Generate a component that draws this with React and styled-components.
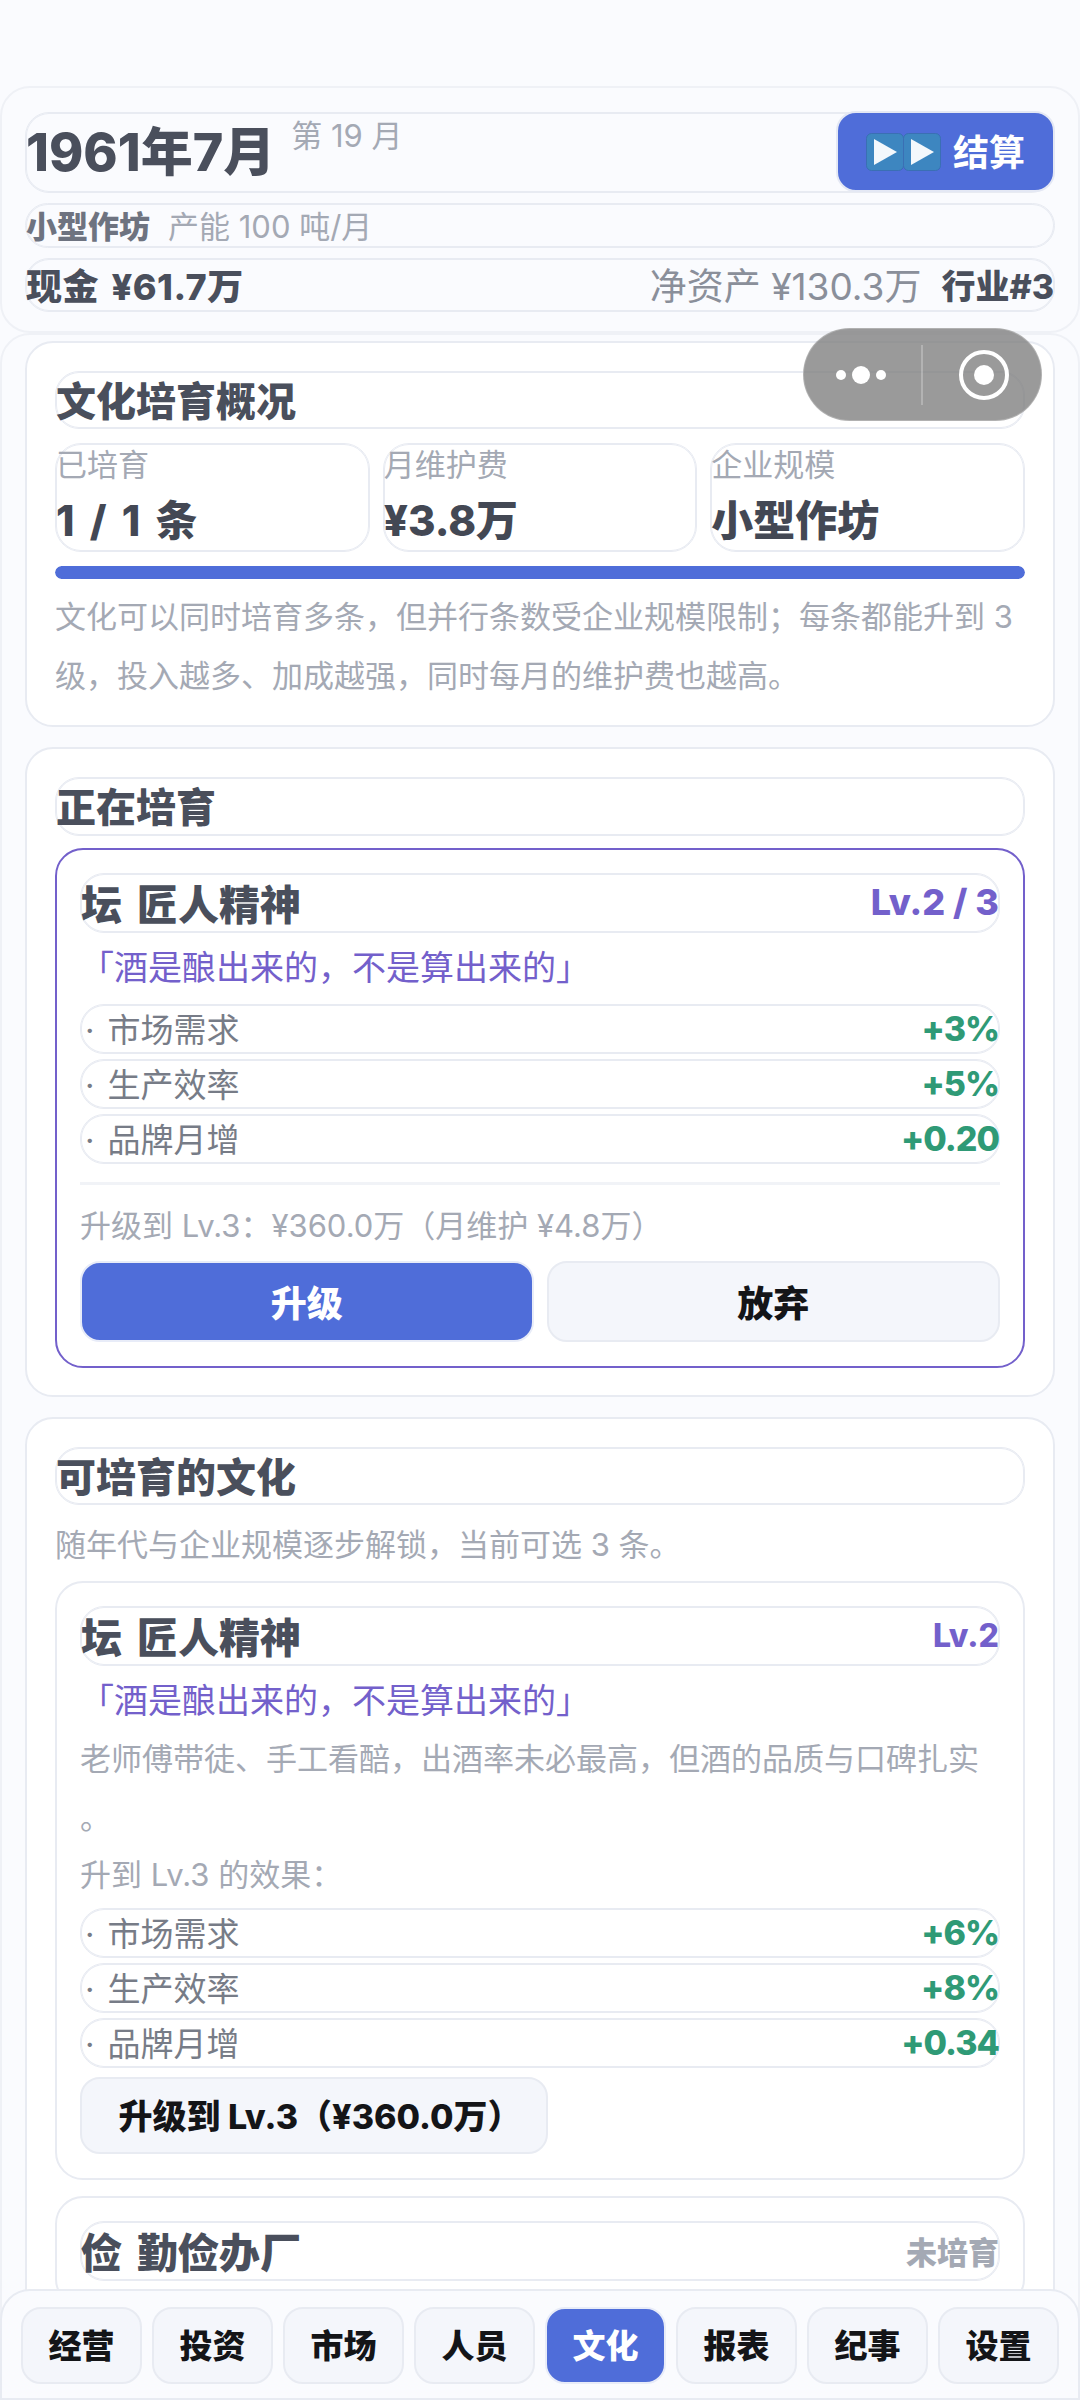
import React from "react";
import styled, { createGlobalStyle } from "styled-components";

const GlobalStyle = createGlobalStyle`
  html, body {
    margin: 0;
    padding: 0;
    height: 100%;
    overflow: hidden;
    background: #fafbfe;
  }
  * {
    box-sizing: border-box;
  }
  body {
    font-family: Inter, "Noto Sans CJK SC", sans-serif;
    color: #4a4f5c;
  }
`;

const line = "#e8ebf2";
const blue = "#4f6dd9";
const purple = "#7360cb";
const muted = "#a4a9b4";
const stack = `Inter, "Noto Sans CJK SC", sans-serif`;

const Page = styled.div`
  height: 2400px;
  padding-top: 86px;
  display: flex;
  flex-direction: column;
  overflow: hidden;
`;

const Header = styled.header`
  border: 2px solid #eff1f6;
  border-radius: 30px;
  padding: 24px 23px 18px;
  display: flex;
  flex-direction: column;
  gap: 10px;
  height: 247px;
  flex: none;
`;

// every text row in this app has a thin rounded outline and no padding,
// the text sits almost on the outline
const Row = styled.div`
  display: flex;
  align-items: center;
  justify-content: ${(p) => p.$justify || "space-between"};
  border: 1px solid ${line};
  box-shadow: inset 0 0 0 1px ${line};
  border-radius: 24px;
  height: ${(p) => p.$h}px;
  padding-bottom: 2px;
  flex: none;
`;

const DateText = styled.div`
  font-size: 52px;
  font-weight: 800;
  line-height: 1;
  margin-top: -4px;
`;

const Month = styled.span`
  font-size: 31px;
  font-weight: 400;
  color: ${muted};
  margin-left: 16px;
  vertical-align: 24px;
`;

const SettleButton = styled.button`
  width: 219px;
  height: 81px;
  margin: 0 -1px 0 0;
  border: 2px solid #e4e8f4;
  border-radius: 20px;
  background: ${blue};
  color: #fff;
  font: 700 36px ${stack};
  display: flex;
  align-items: center;
  justify-content: center;
  gap: 12px;
  padding: 0;
`;

const SettleLabel = styled.span`
  margin-top: -4px;
`;

const Scale = styled.span`
  font-size: 31px;
  font-weight: 800;
  color: #6e7380;
  margin-right: 18px;
`;

const Capacity = styled.span`
  font-size: 31px;
  color: ${muted};
`;

const Cash = styled.span`
  font-size: 36px;
  font-weight: 800;
  word-spacing: 4px;
  letter-spacing: 0.5px;
`;

const RightGroup = styled.div`
  display: flex;
  align-items: center;
  gap: 20px;
`;

const NetWorth = styled.span`
  font-size: 37px;
  color: #8a8f9a;
`;

const Rank = styled.span`
  font-size: 34px;
  font-weight: 800;
`;

const Content = styled.main`
  flex: 1;
  min-height: 0;
  overflow: hidden;
  border: 2px solid #eff1f6;
  border-radius: 30px 30px 0 0;
  padding: 6px 23px 0;
  display: flex;
  flex-direction: column;
  gap: 20px;
`;

const Card = styled.section`
  background: #fff;
  border: 2px solid ${line};
  border-radius: 28px;
  padding: 28px 28px 27px;
  flex: none;
`;

const SectionTitle = styled(Row)`
  font-size: 40px;
  font-weight: 800;
  padding-bottom: 3px;
`;

const Stats = styled.div`
  display: grid;
  grid-template-columns: repeat(3, 1fr);
  gap: 13px;
  margin-top: 14px;
`;

const Stat = styled.div`
  height: 109px;
  border: 1px solid ${line};
  box-shadow: inset 0 0 0 1px ${line};
  border-radius: 26px;
`;

const StatLabel = styled.div`
  font-size: 31px;
  line-height: 42px;
  color: ${muted};
`;

const StatValue = styled.div`
  font-size: 42px;
  font-weight: 800;
  line-height: 56px;
  margin-top: 7px;
  word-spacing: 6px;
  color: #434854;
`;

const Track = styled.div`
  height: 13px;
  margin-top: 14px;
  border-radius: 7px;
  background: ${line};
  overflow: hidden;
`;

const Fill = styled.div`
  height: 100%;
  background: ${blue};
  border-radius: 7px;
`;

const Desc = styled.p`
  margin: ${(p) => p.$m || "0"};
  font-size: 31px;
  line-height: 59px;
  color: ${muted};
`;

const CultureCard = styled.div`
  border: 2px solid ${(p) => (p.$active ? purple : line)};
  border-radius: 28px;
  padding: 23px 23px 24px;
  margin-top: ${(p) => p.$mt || 0}px;
  background: #fff;
`;

const CultureName = styled(Row)`
  font-size: 41px;
  font-weight: 800;
  height: 60px;
  word-spacing: 6px;
`;

const Level = styled.span`
  font-size: ${(p) => (p.$small ? 32 : 36)}px;
  font-weight: 800;
  color: ${purple};
  word-spacing: 0;
`;

const Status = styled.span`
  font-size: 31px;
  font-weight: 800;
  color: ${muted};
`;

const Quote = styled.div`
  font-size: 34px;
  line-height: 59px;
  margin-top: 5px;
  margin-bottom: -1px;
  color: ${purple};
`;

const Effects = styled.div`
  display: flex;
  flex-direction: column;
  gap: 5px;
  margin-top: ${(p) => p.$mt || 0}px;
`;

const Effect = styled(Row)`
  height: 50px;
  font-size: 33px;
  color: #777c87;
`;

const EffectDot = styled.span`
  margin: 0 13px 0 4px;
`;

const EffectValue = styled.span`
  font-size: 34px;
  font-weight: 800;
  letter-spacing: -1px;
  color: #2f9a76;
`;

const Divider = styled.div`
  height: 3px;
  margin-top: 18px;
  background: #f1f3f7;
`;

const UpgradeNote = styled.div`
  font-size: 31px;
  line-height: 60px;
  margin-top: 11px;
  color: ${muted};
`;

const EffectsLabel = styled.div`
  font-size: 31px;
  line-height: 56px;
  color: ${muted};
`;

const Actions = styled.div`
  display: grid;
  grid-template-columns: 1fr 1fr;
  gap: 13px;
  margin-top: 5px;
`;

const ActionButton = styled.button`
  height: 81px;
  border: 2px solid ${(p) => (p.$primary ? "#e8ecf8" : line)};
  border-radius: 20px;
  background: ${(p) => (p.$primary ? blue : "#f4f6fb")};
  color: ${(p) => (p.$primary ? "#fff" : "#141518")};
  font: 800 36px ${stack};
  padding: 0 0 2px;
`;

const UpgradeButton = styled.button`
  display: block;
  width: 468px;
  height: 77px;
  margin-top: 9px;
  border: 2px solid ${line};
  border-radius: 20px;
  background: #f4f6fb;
  color: #141518;
  font: 800 34px ${stack};
  padding: 0 0 2px 12px;
`;

const Capsule = styled.div`
  position: fixed;
  top: 328px;
  left: 803px;
  width: 239px;
  height: 93px;
  border-radius: 47px;
  background: rgba(125, 125, 125, 0.78);
  border: 1px solid rgba(200, 200, 200, 0.5);
  display: flex;
  align-items: center;
`;

const CapsulePart = styled.div`
  flex: 1;
  height: 100%;
  display: flex;
  align-items: center;
  justify-content: center;
  padding: ${(p) => p.$pad};
`;

const CapsuleDivider = styled.div`
  width: 2px;
  height: 60px;
  flex: none;
  background: rgba(255, 255, 255, 0.25);
`;

const Nav = styled.nav`
  position: fixed;
  left: 0;
  right: 0;
  top: 2289px;
  height: 111px;
  background: #fafbfe;
  border: 2px solid ${line};
  border-radius: 30px 30px 0 0;
  padding: 16px 19px 0;
  display: grid;
  grid-template-columns: repeat(8, 1fr);
  gap: 10px;
`;

const NavButton = styled.button`
  height: 77px;
  border: 2px solid ${(p) => (p.$active ? "#e8ecf8" : line)};
  border-radius: 20px;
  background: ${(p) => (p.$active ? blue : "#f4f6fb")};
  color: ${(p) => (p.$active ? "#fff" : "#141518")};
  font: 800 33px ${stack};
  padding: 0 0 3px;
`;

const FastForward = () => (
  <svg width="75" height="38" viewBox="0 0 75 38">
    <rect x="0.5" y="0.5" width="37" height="37" rx="5" fill="#3d86c0" stroke="#3a6fb4" />
    <rect x="37.5" y="0.5" width="37" height="37" rx="5" fill="#3d86c0" stroke="#3a6fb4" />
    <path d="M8 6 L31 19 L8 32 Z" fill="#f4f8fc" />
    <path d="M45 6 L68 19 L45 32 Z" fill="#f4f8fc" />
  </svg>
);

const effectsNow = [
  ["市场需求", "+3%"],
  ["生产效率", "+5%"],
  ["品牌月增", "+0.20"],
];

const effectsNext = [
  ["市场需求", "+6%"],
  ["生产效率", "+8%"],
  ["品牌月增", "+0.34"],
];

const stats = [
  ["已培育", "1 / 1 条"],
  ["月维护费", "¥3.8万"],
  ["企业规模", "小型作坊"],
];

const tabs = ["经营", "投资", "市场", "人员", "文化", "报表", "纪事", "设置"];

const EffectList = ({ items, mt }) => (
  <Effects $mt={mt}>
    {items.map(([name, value]) => (
      <Effect key={name}>
        <span>
          <EffectDot>·</EffectDot>
          {name}
        </span>
        <EffectValue>{value}</EffectValue>
      </Effect>
    ))}
  </Effects>
);

export default function App() {
  return (
    <Page>
      <GlobalStyle />
      <Header>
        <Row $h={81}>
          <DateText>
            1961年7月<Month>第 19 月</Month>
          </DateText>
          <SettleButton>
            <FastForward />
            <SettleLabel>结算</SettleLabel>
          </SettleButton>
        </Row>
        <Row $h={45} $justify="flex-start">
          <Scale>小型作坊</Scale>
          <Capacity>产能 100 吨/月</Capacity>
        </Row>
        <Row $h={54}>
          <Cash>现金 ¥61.7万</Cash>
          <RightGroup>
            <NetWorth>净资产 ¥130.3万</NetWorth>
            <Rank>行业#3</Rank>
          </RightGroup>
        </Row>
      </Header>

      <Content>
        <Card>
          <SectionTitle $h={58}>文化培育概况</SectionTitle>
          <Stats>
            {stats.map(([label, value]) => (
              <Stat key={label}>
                <StatLabel>{label}</StatLabel>
                <StatValue>{value}</StatValue>
              </Stat>
            ))}
          </Stats>
          <Track>
            <Fill style={{ width: `${(1 / 1) * 100}%` }} />
          </Track>
          <Desc $m="8px 0 -7px">
            文化可以同时培育多条，但并行条数受企业规模限制；每条都能升到 3
            级，投入越多、加成越强，同时每月的维护费也越高。
          </Desc>
        </Card>

        <Card>
          <SectionTitle $h={59}>正在培育</SectionTitle>
          <CultureCard $active $mt={12}>
            <CultureName>
              <span>坛 匠人精神</span>
              <Level>Lv.2 / 3</Level>
            </CultureName>
            <Quote>「酒是酿出来的，不是算出来的」</Quote>
            <EffectList items={effectsNow} mt={8} />
            <Divider />
            <UpgradeNote>升级到 Lv.3：¥360.0万（月维护 ¥4.8万）</UpgradeNote>
            <Actions>
              <ActionButton $primary>升级</ActionButton>
              <ActionButton>放弃</ActionButton>
            </Actions>
          </CultureCard>
        </Card>

        <Card>
          <SectionTitle $h={58}>可培育的文化</SectionTitle>
          <Desc $m="10px 0 7px">随年代与企业规模逐步解锁，当前可选 3 条。</Desc>
          <CultureCard>
            <CultureName>
              <span>坛 匠人精神</span>
              <Level $small>Lv.2</Level>
            </CultureName>
            <Quote>「酒是酿出来的，不是算出来的」</Quote>
            <Desc>
              老师傅带徒、手工看醅，出酒率未必最高，但酒的品质与口碑扎实
              <br />。
            </Desc>
            <EffectsLabel>升到 Lv.3 的效果：</EffectsLabel>
            <EffectList items={effectsNext} mt={5} />
            <UpgradeButton>升级到 Lv.3（¥360.0万）</UpgradeButton>
          </CultureCard>
          <CultureCard $mt={16}>
            <CultureName>
              <span>俭 勤俭办厂</span>
              <Status>未培育</Status>
            </CultureName>
          </CultureCard>
        </Card>
      </Content>

      <Capsule>
        <CapsulePart $pad="0 3px 0 0">
          <svg width="60" height="20" viewBox="0 0 60 20">
            <circle cx="10" cy="10" r="5" fill="#fff" />
            <circle cx="30" cy="10" r="9" fill="#fff" />
            <circle cx="50" cy="10" r="5" fill="#fff" />
          </svg>
        </CapsulePart>
        <CapsuleDivider />
        <CapsulePart $pad="0 0 0 4px">
          <svg width="52" height="52" viewBox="0 0 52 52">
            <circle cx="26" cy="26" r="23" fill="none" stroke="#fff" strokeWidth="4" />
            <circle cx="26" cy="26" r="10" fill="#fff" />
          </svg>
        </CapsulePart>
      </Capsule>

      <Nav>
        {tabs.map((tab) => (
          <NavButton key={tab} $active={tab === "文化"}>
            {tab}
          </NavButton>
        ))}
      </Nav>
    </Page>
  );
}
